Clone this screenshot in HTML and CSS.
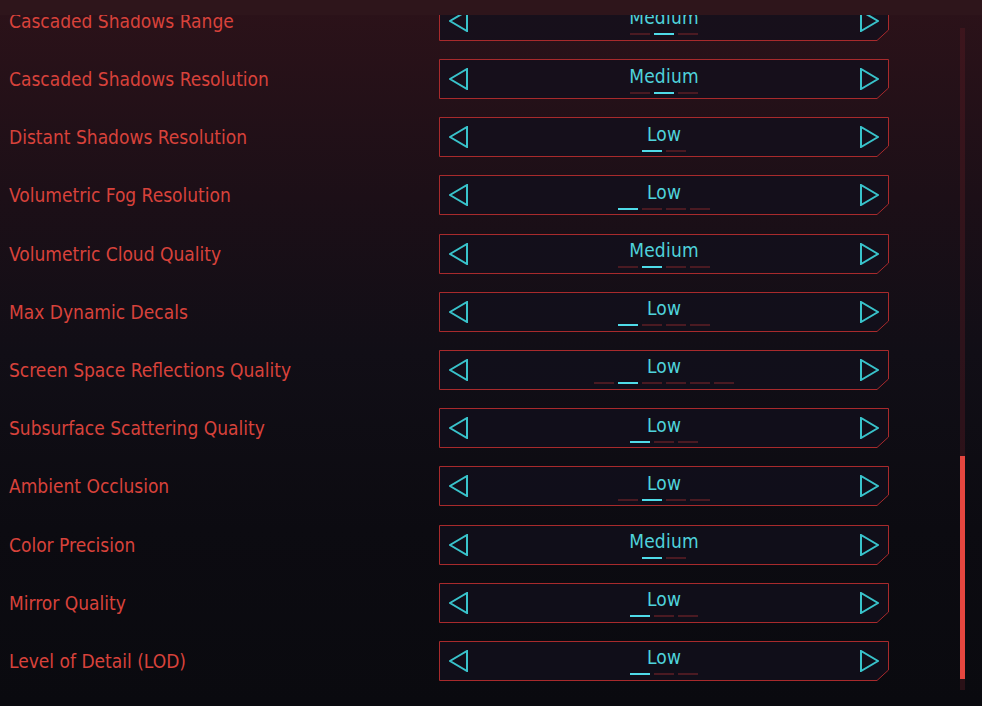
FILE: index.html
```html
<!DOCTYPE html>
<html>
<head>
<meta charset="utf-8">
<link rel="stylesheet" href="styles.css">
</head>
<body>
<div class="screen">
  <div class="topband"></div>
  <div class="viewport">
    <ul class="list">
      <li class="row"><span class="label">Cascaded Shadows Range</span>
        <div class="selector">
          <svg class="frame" viewBox="0 0 450 40" preserveAspectRatio="none"><polygon points="0.5,0.5 449.5,0.5 449.5,29 438,39.5 0.5,39.5"/></svg>
          <svg class="arrow" viewBox="0 0 20 22"><polygon points="18,1 18,21 1,11"/></svg>
          <div class="value"><span class="text">Medium</span><div class="dashes"><i></i><i class="on"></i><i></i></div></div>
          <svg class="arrow" viewBox="0 0 20 22"><polygon points="2,1 2,21 19,11"/></svg>
        </div>
      </li>
      <li class="row"><span class="label">Cascaded Shadows Resolution</span>
        <div class="selector">
          <svg class="frame" viewBox="0 0 450 40" preserveAspectRatio="none"><polygon points="0.5,0.5 449.5,0.5 449.5,29 438,39.5 0.5,39.5"/></svg>
          <svg class="arrow" viewBox="0 0 20 22"><polygon points="18,1 18,21 1,11"/></svg>
          <div class="value"><span class="text">Medium</span><div class="dashes"><i></i><i class="on"></i><i></i></div></div>
          <svg class="arrow" viewBox="0 0 20 22"><polygon points="2,1 2,21 19,11"/></svg>
        </div>
      </li>
      <li class="row"><span class="label">Distant Shadows Resolution</span>
        <div class="selector">
          <svg class="frame" viewBox="0 0 450 40" preserveAspectRatio="none"><polygon points="0.5,0.5 449.5,0.5 449.5,29 438,39.5 0.5,39.5"/></svg>
          <svg class="arrow" viewBox="0 0 20 22"><polygon points="18,1 18,21 1,11"/></svg>
          <div class="value"><span class="text">Low</span><div class="dashes"><i class="on"></i><i></i></div></div>
          <svg class="arrow" viewBox="0 0 20 22"><polygon points="2,1 2,21 19,11"/></svg>
        </div>
      </li>
      <li class="row"><span class="label">Volumetric Fog Resolution</span>
        <div class="selector">
          <svg class="frame" viewBox="0 0 450 40" preserveAspectRatio="none"><polygon points="0.5,0.5 449.5,0.5 449.5,29 438,39.5 0.5,39.5"/></svg>
          <svg class="arrow" viewBox="0 0 20 22"><polygon points="18,1 18,21 1,11"/></svg>
          <div class="value"><span class="text">Low</span><div class="dashes"><i class="on"></i><i></i><i></i><i></i></div></div>
          <svg class="arrow" viewBox="0 0 20 22"><polygon points="2,1 2,21 19,11"/></svg>
        </div>
      </li>
      <li class="row"><span class="label">Volumetric Cloud Quality</span>
        <div class="selector">
          <svg class="frame" viewBox="0 0 450 40" preserveAspectRatio="none"><polygon points="0.5,0.5 449.5,0.5 449.5,29 438,39.5 0.5,39.5"/></svg>
          <svg class="arrow" viewBox="0 0 20 22"><polygon points="18,1 18,21 1,11"/></svg>
          <div class="value"><span class="text">Medium</span><div class="dashes"><i></i><i class="on"></i><i></i><i></i></div></div>
          <svg class="arrow" viewBox="0 0 20 22"><polygon points="2,1 2,21 19,11"/></svg>
        </div>
      </li>
      <li class="row"><span class="label">Max Dynamic Decals</span>
        <div class="selector">
          <svg class="frame" viewBox="0 0 450 40" preserveAspectRatio="none"><polygon points="0.5,0.5 449.5,0.5 449.5,29 438,39.5 0.5,39.5"/></svg>
          <svg class="arrow" viewBox="0 0 20 22"><polygon points="18,1 18,21 1,11"/></svg>
          <div class="value"><span class="text">Low</span><div class="dashes"><i class="on"></i><i></i><i></i><i></i></div></div>
          <svg class="arrow" viewBox="0 0 20 22"><polygon points="2,1 2,21 19,11"/></svg>
        </div>
      </li>
      <li class="row"><span class="label">Screen Space Reflections Quality</span>
        <div class="selector">
          <svg class="frame" viewBox="0 0 450 40" preserveAspectRatio="none"><polygon points="0.5,0.5 449.5,0.5 449.5,29 438,39.5 0.5,39.5"/></svg>
          <svg class="arrow" viewBox="0 0 20 22"><polygon points="18,1 18,21 1,11"/></svg>
          <div class="value"><span class="text">Low</span><div class="dashes"><i></i><i class="on"></i><i></i><i></i><i></i><i></i></div></div>
          <svg class="arrow" viewBox="0 0 20 22"><polygon points="2,1 2,21 19,11"/></svg>
        </div>
      </li>
      <li class="row"><span class="label">Subsurface Scattering Quality</span>
        <div class="selector">
          <svg class="frame" viewBox="0 0 450 40" preserveAspectRatio="none"><polygon points="0.5,0.5 449.5,0.5 449.5,29 438,39.5 0.5,39.5"/></svg>
          <svg class="arrow" viewBox="0 0 20 22"><polygon points="18,1 18,21 1,11"/></svg>
          <div class="value"><span class="text">Low</span><div class="dashes"><i class="on"></i><i></i><i></i></div></div>
          <svg class="arrow" viewBox="0 0 20 22"><polygon points="2,1 2,21 19,11"/></svg>
        </div>
      </li>
      <li class="row"><span class="label">Ambient Occlusion</span>
        <div class="selector">
          <svg class="frame" viewBox="0 0 450 40" preserveAspectRatio="none"><polygon points="0.5,0.5 449.5,0.5 449.5,29 438,39.5 0.5,39.5"/></svg>
          <svg class="arrow" viewBox="0 0 20 22"><polygon points="18,1 18,21 1,11"/></svg>
          <div class="value"><span class="text">Low</span><div class="dashes"><i></i><i class="on"></i><i></i><i></i></div></div>
          <svg class="arrow" viewBox="0 0 20 22"><polygon points="2,1 2,21 19,11"/></svg>
        </div>
      </li>
      <li class="row"><span class="label">Color Precision</span>
        <div class="selector">
          <svg class="frame" viewBox="0 0 450 40" preserveAspectRatio="none"><polygon points="0.5,0.5 449.5,0.5 449.5,29 438,39.5 0.5,39.5"/></svg>
          <svg class="arrow" viewBox="0 0 20 22"><polygon points="18,1 18,21 1,11"/></svg>
          <div class="value"><span class="text">Medium</span><div class="dashes"><i class="on"></i><i></i></div></div>
          <svg class="arrow" viewBox="0 0 20 22"><polygon points="2,1 2,21 19,11"/></svg>
        </div>
      </li>
      <li class="row"><span class="label">Mirror Quality</span>
        <div class="selector">
          <svg class="frame" viewBox="0 0 450 40" preserveAspectRatio="none"><polygon points="0.5,0.5 449.5,0.5 449.5,29 438,39.5 0.5,39.5"/></svg>
          <svg class="arrow" viewBox="0 0 20 22"><polygon points="18,1 18,21 1,11"/></svg>
          <div class="value"><span class="text">Low</span><div class="dashes"><i class="on"></i><i></i><i></i></div></div>
          <svg class="arrow" viewBox="0 0 20 22"><polygon points="2,1 2,21 19,11"/></svg>
        </div>
      </li>
      <li class="row"><span class="label">Level of Detail (LOD)</span>
        <div class="selector">
          <svg class="frame" viewBox="0 0 450 40" preserveAspectRatio="none"><polygon points="0.5,0.5 449.5,0.5 449.5,29 438,39.5 0.5,39.5"/></svg>
          <svg class="arrow" viewBox="0 0 20 22"><polygon points="18,1 18,21 1,11"/></svg>
          <div class="value"><span class="text">Low</span><div class="dashes"><i class="on"></i><i></i><i></i></div></div>
          <svg class="arrow" viewBox="0 0 20 22"><polygon points="2,1 2,21 19,11"/></svg>
        </div>
      </li>
    </ul>
  </div>
  <div class="scrollbar"><div class="thumb"></div></div>
</div>
</body>
</html>
```

FILE: styles.css
```css
html, body {
  margin: 0;
  padding: 0;
  width: 982px;
  height: 706px;
  overflow: hidden;
}

body {
  background: linear-gradient(180deg, #2c1219 0%, #1c0f17 28%, #110e16 50%, #0c0b11 75%, #0a0a0f 100%);
  font-family: "DejaVu Sans", sans-serif;
  font-stretch: condensed;
}

.screen {
  position: relative;
  width: 982px;
  height: 706px;
  display: flex;
  flex-direction: column;
}

.topband {
  height: 15px;
  flex: none;
  background: #2e151b;
}

.viewport {
  flex: 1;
  overflow: hidden;
}

.list {
  list-style: none;
  margin: -14.2px 0 0 0;
  padding: 0;
  display: flex;
  flex-direction: column;
  gap: 18.2px;
}

.row {
  display: grid;
  grid-template-columns: 439px 450px;
  align-items: center;
  height: 40px;
}

.label {
  padding-left: 9px;
  color: #d8423b;
  font-size: 19px;
  letter-spacing: 0;
  white-space: nowrap;
}

.selector {
  position: relative;
  height: 40px;
  display: flex;
  align-items: center;
  justify-content: space-between;
  padding: 0 10px 0 10px;
  box-sizing: border-box;
}

.frame {
  position: absolute;
  left: 0;
  top: 0;
  width: 450px;
  height: 40px;
}

.frame polygon {
  fill: rgba(18, 15, 28, 0.78);
  stroke: #a82a2c;
  stroke-width: 1;
}

.arrow {
  position: relative;
  width: 20px;
  height: 22px;
  flex: none;
}

.arrow polygon {
  fill: none;
  stroke: #39c3cb;
  stroke-width: 2;
  stroke-linejoin: miter;
}

.value {
  position: relative;
  display: flex;
  flex-direction: column;
  align-items: center;
  margin-top: -1px;
}

.text {
  color: #4fd3dc;
  font-size: 19px;
  line-height: 24px;
  letter-spacing: 0.2px;
}

.dashes {
  display: flex;
  gap: 4px;
  margin-top: 4px;
}

.dashes i {
  display: block;
  width: 20px;
  height: 2px;
  background: #4a1a22;
}

.dashes i.on {
  background: #4fdbe8;
}

.scrollbar {
  position: absolute;
  left: 960px;
  top: 28px;
  width: 5px;
  height: 662px;
  background: rgba(90, 28, 34, 0.4);
}

.thumb {
  position: absolute;
  left: 0;
  top: 428px;
  width: 5px;
  height: 223px;
  background: #e5463f;
}
```
